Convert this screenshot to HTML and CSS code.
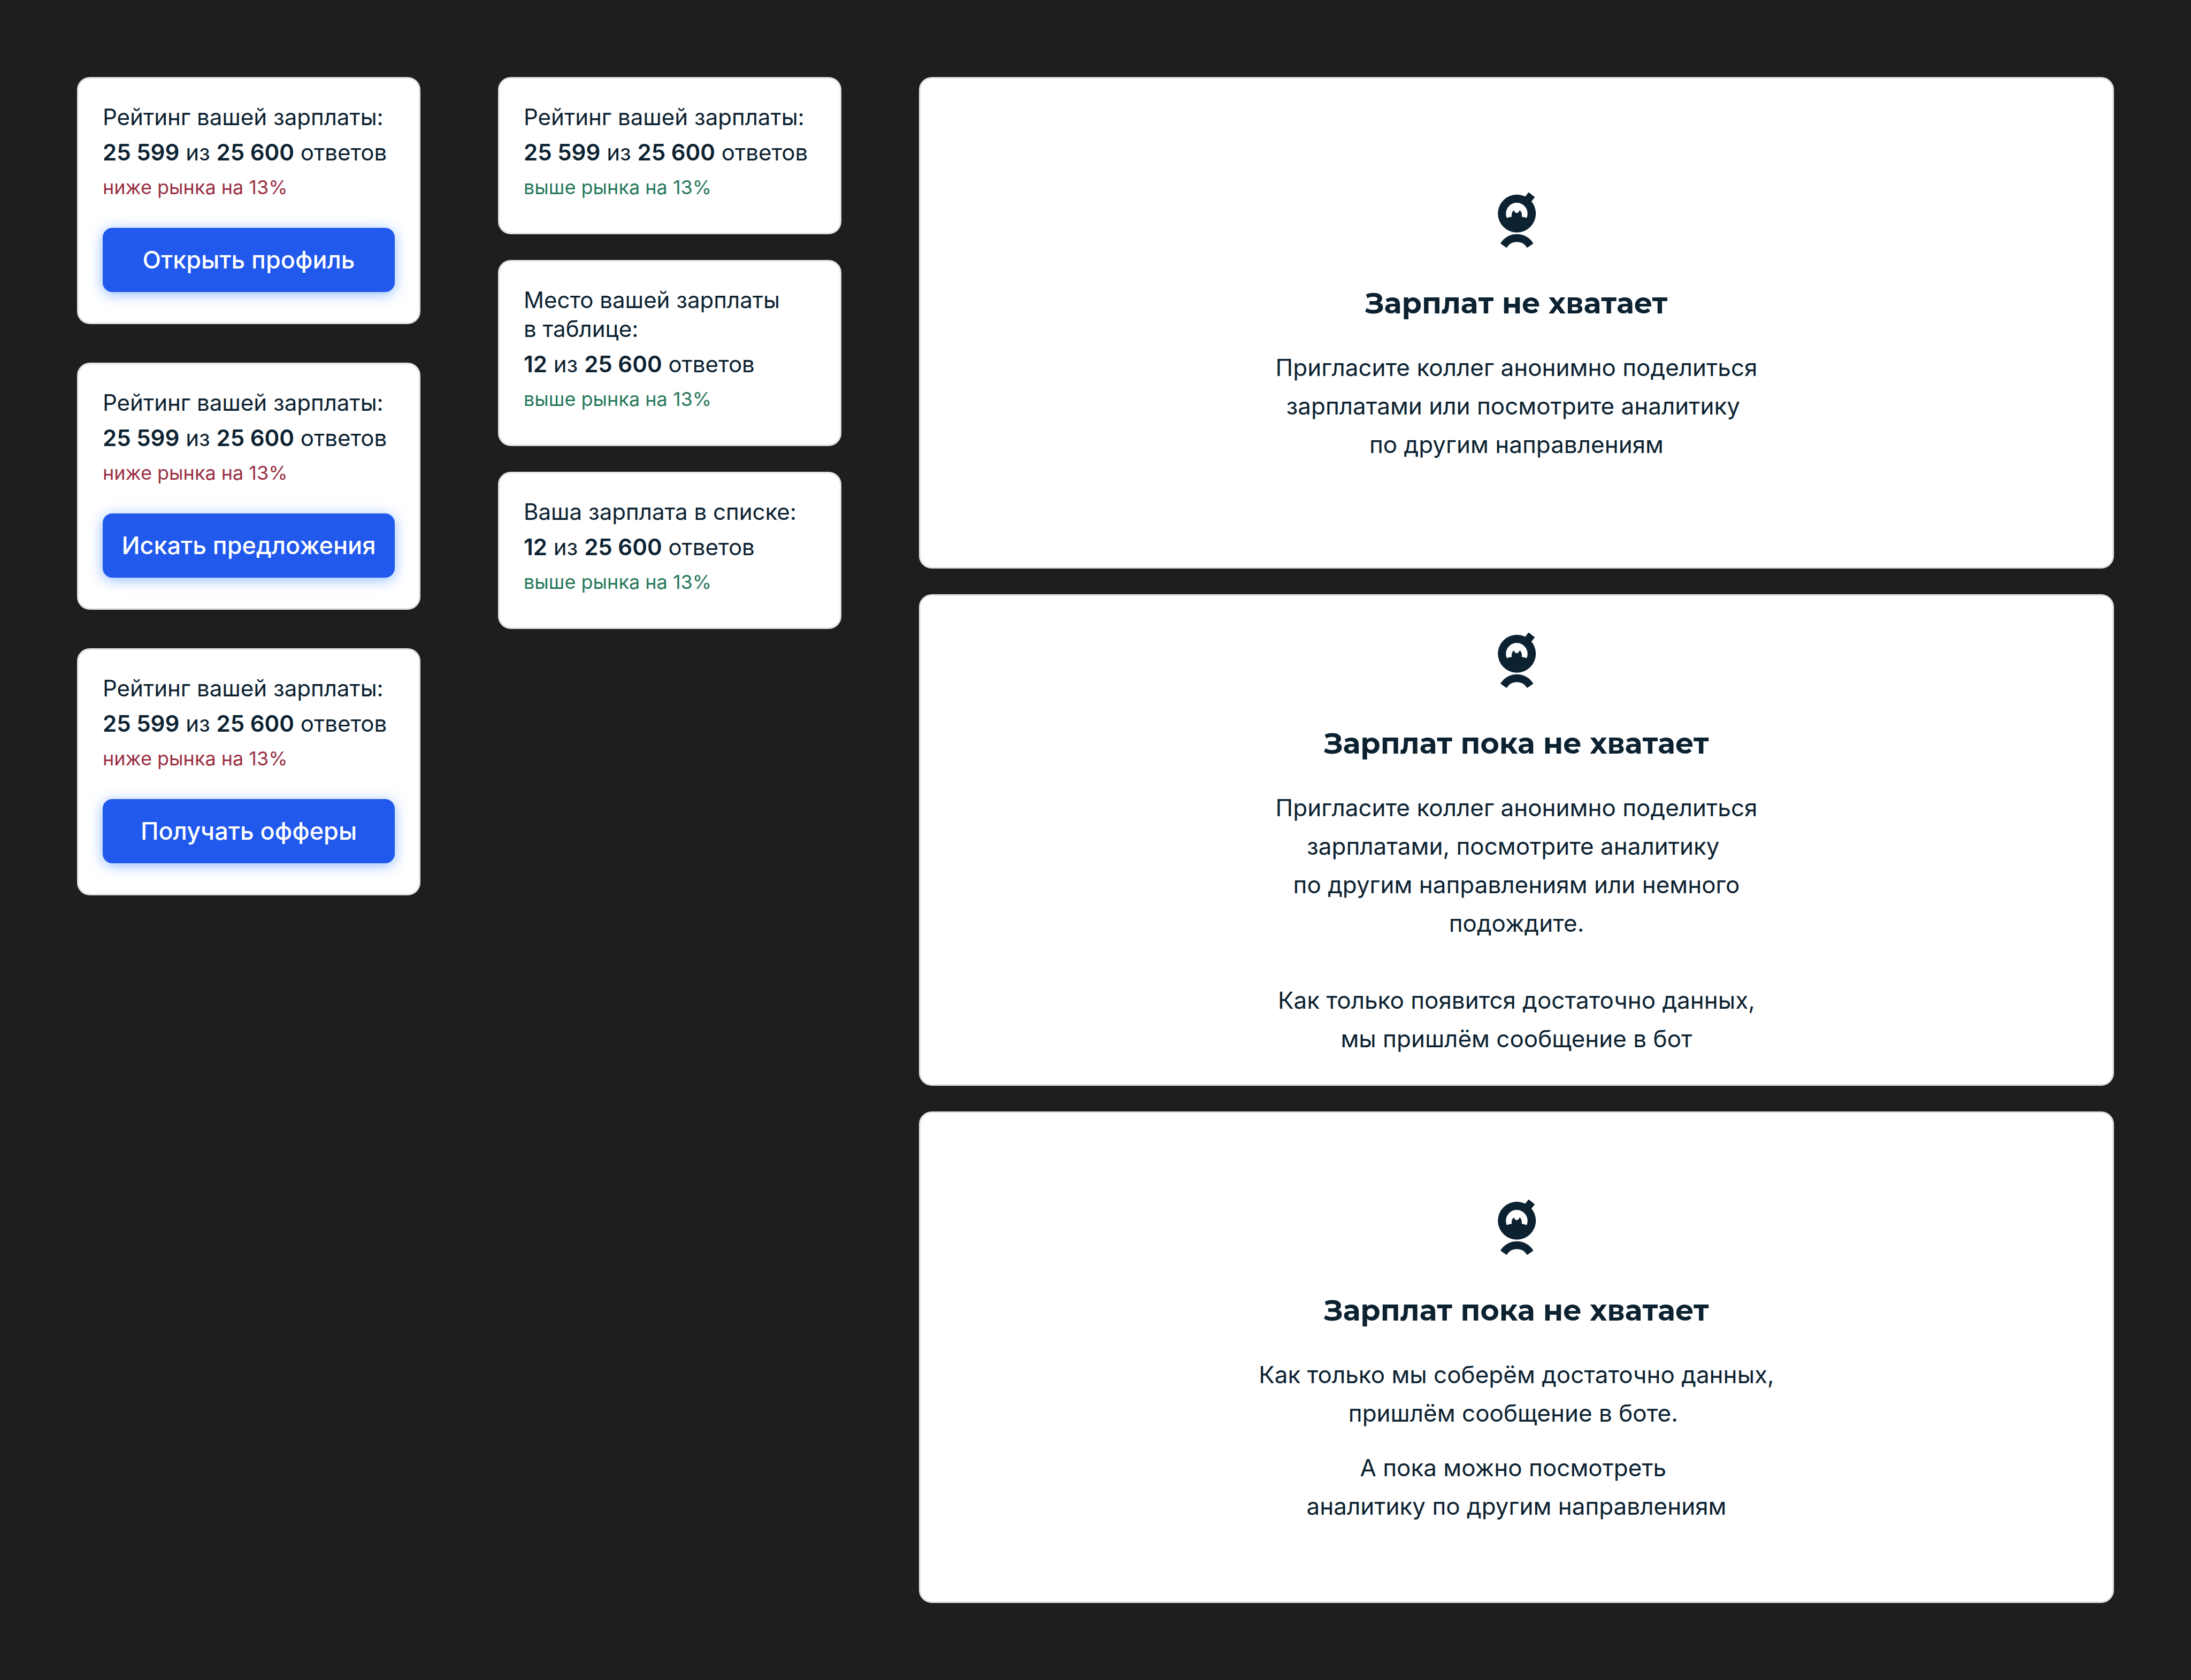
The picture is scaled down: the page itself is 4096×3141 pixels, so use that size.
FILE: index.html
```html
<!DOCTYPE html>
<html lang="ru">
<head>
<meta charset="utf-8">
<meta name="viewport" content="width=device-width, initial-scale=1">
<title>Рейтинг зарплат</title>
<link rel="stylesheet" href="styles.css">
</head>
<body>
<svg class="sprite" aria-hidden="true">
  <symbol id="mascot" viewBox="138 84 300 416">
    <circle class="mascot-ink" cx="289" cy="245" r="142"/>
    <path class="mascot-ink mascot-round" d="M377 91 L418 123 L389 160 L349 128 Z"/>
    <path class="mascot-hole" d="M214 278 A81 81 0 1 1 362 278 Q344 271 325 268 Q331 243 313 221 Q309 221 306 226 Q301 241 288 241 Q275 241 270 226 Q267 221 263 222 Q245 243 251 268 Q232 271 214 278 Z"/>
    <path class="mascot-ink mascot-round" d="M171 468 A140 140 0 0 1 407 468 L367 496 A92 92 0 0 0 211 496 Z"/>
  </symbol>
</svg>
<main class="board">
  <section class="column column-wide-gap">
    <article class="card rating">
      <p class="rating-title">Рейтинг вашей зарплаты:</p>
      <p class="rating-value"><b>25 599</b> из <b>25 600</b> ответов</p>
      <p class="rating-status below">ниже рынка на 13%</p>
      <button class="button" type="button">Открыть профиль</button>
    </article>
    <article class="card rating">
      <p class="rating-title">Рейтинг вашей зарплаты:</p>
      <p class="rating-value"><b>25 599</b> из <b>25 600</b> ответов</p>
      <p class="rating-status below">ниже рынка на 13%</p>
      <button class="button" type="button">Искать предложения</button>
    </article>
    <article class="card rating">
      <p class="rating-title">Рейтинг вашей зарплаты:</p>
      <p class="rating-value"><b>25 599</b> из <b>25 600</b> ответов</p>
      <p class="rating-status below">ниже рынка на 13%</p>
      <button class="button" type="button">Получать офферы</button>
    </article>
  </section>

  <section class="column">
    <article class="card rating">
      <p class="rating-title">Рейтинг вашей зарплаты:</p>
      <p class="rating-value"><b>25 599</b> из <b>25 600</b> ответов</p>
      <p class="rating-status above">выше рынка на 13%</p>
    </article>
    <article class="card rating">
      <p class="rating-title">Место вашей зарплаты<br>в таблице:</p>
      <p class="rating-value"><b>12</b> из <b>25 600</b> ответов</p>
      <p class="rating-status above">выше рынка на 13%</p>
    </article>
    <article class="card rating">
      <p class="rating-title">Ваша зарплата в списке:</p>
      <p class="rating-value"><b>12</b> из <b>25 600</b> ответов</p>
      <p class="rating-status above">выше рынка на 13%</p>
    </article>
  </section>

  <section class="column">
    <article class="card empty">
      <div class="empty-icon"><svg class="mascot" aria-hidden="true"><use href="#mascot"/></svg></div>
      <h2 class="empty-title">Зарплат не хватает</h2>
      <div class="empty-text">
        <p>Пригласите коллег анонимно поделиться<br>зарплатами или посмотрите аналитику&nbsp;<br>по другим направлениям</p>
      </div>
    </article>
    <article class="card empty">
      <div class="empty-icon"><svg class="mascot" aria-hidden="true"><use href="#mascot"/></svg></div>
      <h2 class="empty-title">Зарплат пока не хватает</h2>
      <div class="empty-text">
        <p>Пригласите коллег анонимно поделиться<br>зарплатами, посмотрите аналитику&nbsp;<br>по другим направлениям или немного<br>подождите.<br><br>Как только появится достаточно данных,<br>мы пришлём сообщение в бот</p>
      </div>
    </article>
    <article class="card empty">
      <div class="empty-icon"><svg class="mascot" aria-hidden="true"><use href="#mascot"/></svg></div>
      <h2 class="empty-title">Зарплат пока не хватает</h2>
      <div class="empty-text">
        <p>Как только мы соберём достаточно данных,<br>пришлём сообщение в боте.&nbsp;</p>
        <p>А пока можно посмотреть&nbsp;<br>аналитику по другим направлениям</p>
      </div>
    </article>
  </section>
</main>
</body>
</html>
```
FILE: styles.css
```css
* {
  box-sizing: border-box;
}

body {
  margin: 0;
  background: #1e1e1e;
  color: #0c2231;
  font-family: Inter, "Noto Sans", sans-serif;
}

p,
h2 {
  margin: 0;
}

.sprite {
  display: none;
}

.board {
  display: grid;
  grid-template-columns: 642px 642px minmax(0, 1fr);
  gap: 145px;
  align-items: start;
  padding: 144px;
}

.column {
  display: flex;
  flex-direction: column;
  gap: 48px;
}

.column-wide-gap {
  gap: 72px;
}

.card {
  background: #fff;
  border: 3px solid #e3e3e5;
  border-radius: 24px;
}

/* Salary rating */

.rating {
  display: flex;
  flex-direction: column;
  gap: 12px;
  padding: 45px 45px 57px;
  font-size: 42px;
  line-height: 54px;
}

.rating-value b {
  font-weight: 600;
}

.rating-status {
  padding-bottom: 2px;
  font-size: 36px;
  line-height: 52px;
}

.below {
  color: #9a3043;
}

.above {
  color: #26785a;
}

.button {
  height: 120px;
  margin-top: 36px;
  padding: 0;
  border: 0;
  border-radius: 18px;
  background: #2059ec;
  box-shadow: 0 4px 24px rgba(32, 115, 255, 0.5);
  color: #fff;
  font: 500 45px/60px Inter, "Noto Sans", sans-serif;
  cursor: pointer;
}

/* Not enough data */

.empty {
  display: flex;
  flex-direction: column;
  align-items: center;
  justify-content: center;
  min-height: 919px;
  text-align: center;
}

.empty-icon {
  display: flex;
  align-items: center;
  justify-content: center;
  height: 140px;
}

.mascot {
  width: 75px;
  height: 104px;
}

.mascot-ink {
  fill: #0c2231;
}

.mascot-round {
  stroke: #0c2231;
  stroke-width: 8;
  stroke-linejoin: round;
}

.mascot-hole {
  fill: #fff;
}

.empty-title {
  margin: 50px 0 48px;
  font-family: Montserrat, Inter, "Noto Sans", sans-serif;
  font-size: 54px;
  font-weight: 700;
  line-height: 72px;
}

.empty-text {
  display: flex;
  flex-direction: column;
  gap: 30px;
  font-size: 44px;
  line-height: 72px;
}
```
